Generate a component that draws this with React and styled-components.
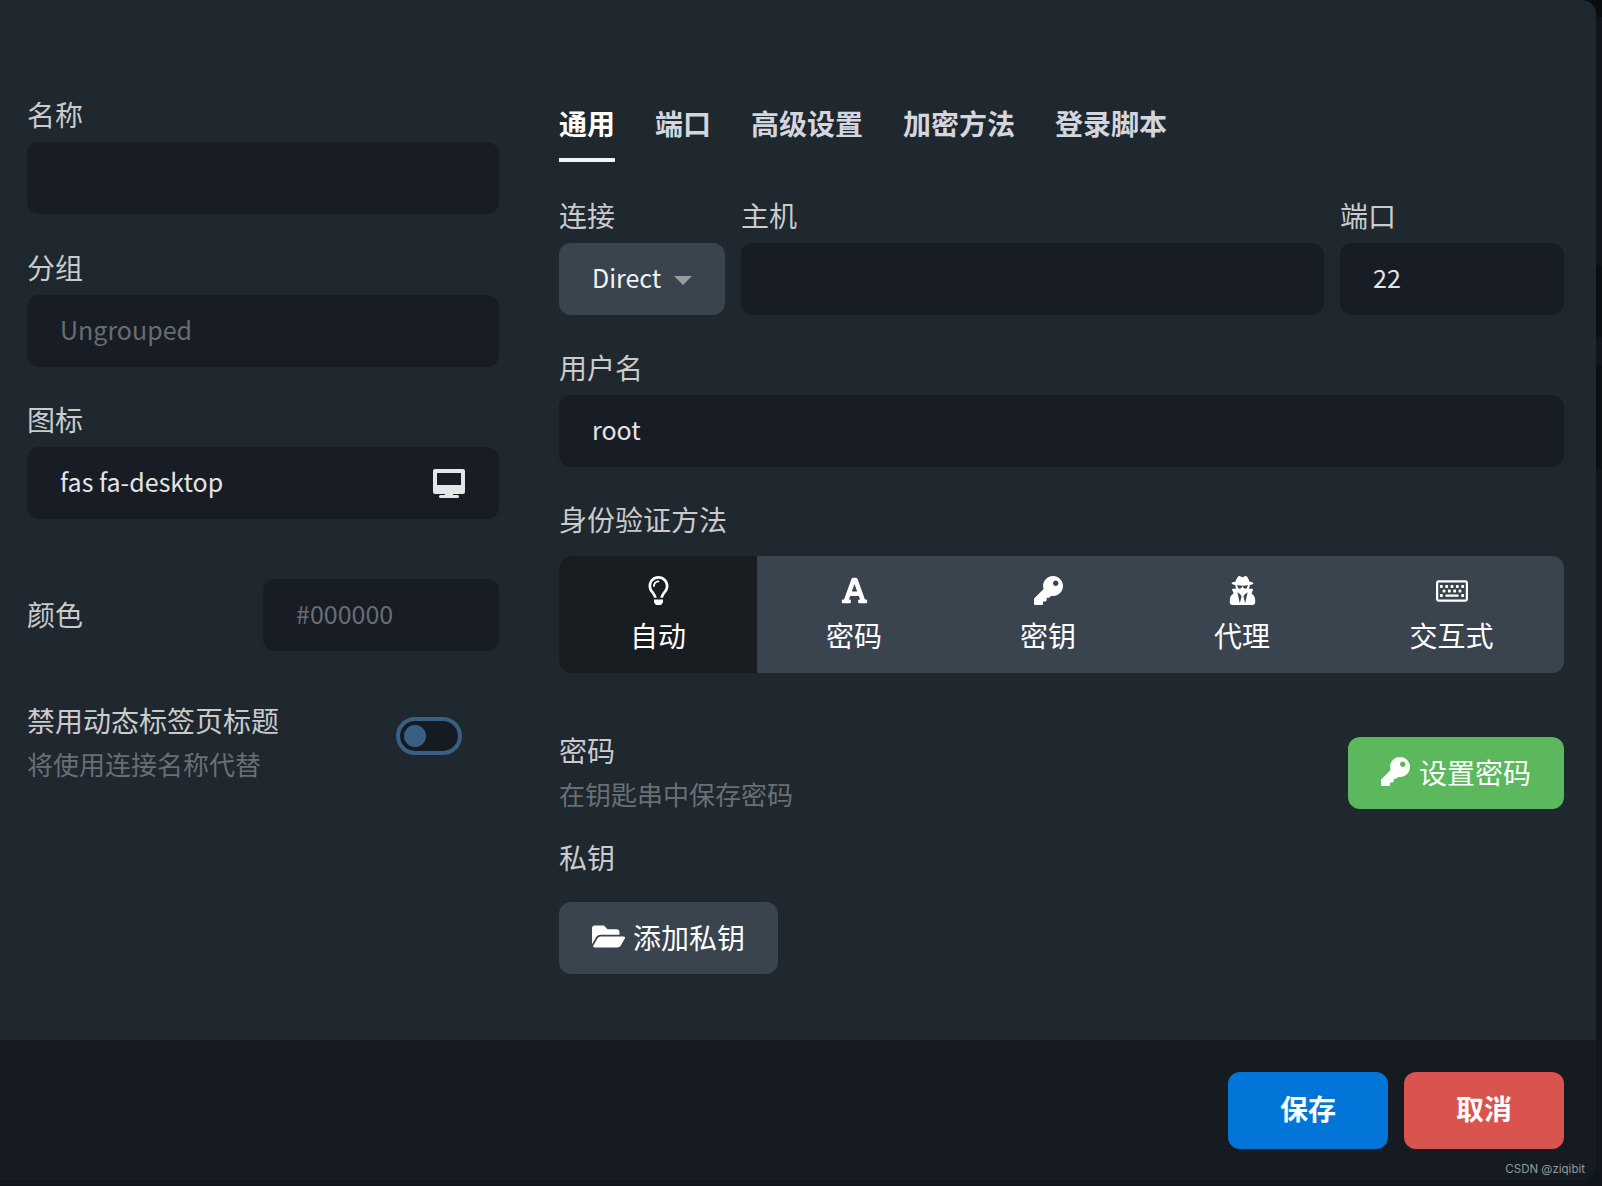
import React from 'react';
import styled, { createGlobalStyle } from 'styled-components';
import {
    FaFolderOpen,
    FaFont,
    FaKey,
    FaRegKeyboard,
    FaRegLightbulb,
    FaUserSecret,
} from 'react-icons/fa';

const GlobalStyle = createGlobalStyle`
    * {
        box-sizing: border-box;
    }
    html, body {
        margin: 0;
        padding: 0;
    }
    body {
        height: 1186px;
        overflow: hidden;
        font-family: "Noto Sans CJK SC", "Noto Sans", sans-serif;
        background: linear-gradient(
            to bottom,
            #0a0e10 0 17px,
            #10161c 17px 265px,
            #0a0f12 265px 337px,
            #10161c 337px 365px,
            #0c1114 365px 470px,
            #10161c 470px
        );
    }
`;

const Dialog = styled.div`
    position: relative;
    width: 1596px;
    height: 1180px;
    display: flex;
    flex-direction: column;
    background: #1f272f;
    border-radius: 0 14px 16px 0;
    overflow: hidden;
`;

const Body = styled.div`
    flex: 1;
    display: flex;
    gap: 60px;
    padding: 94px 32px 0 27px;
`;

const LeftColumn = styled.div`
    width: 472px;
    flex-shrink: 0;
`;

const RightColumn = styled.div`
    flex: 1;
    min-width: 0;
    margin-top: 6px;
`;

const Group = styled.div`
    margin-bottom: ${(p) => p.$gap ?? 33}px;
`;

const Label = styled.div`
    height: 40px;
    line-height: 41px;
    margin-bottom: ${(p) => p.$gap ?? 8}px;
    font-size: 28px;
    color: #c9cbcc;
    white-space: nowrap;
`;

const Field = styled.div`
    height: 72px;
    padding: 0 33px 4px;
    border-radius: 12px;
    background: #181d25;
    font-size: 25px;
    color: ${(p) => (p.$muted ? '#666d74' : '#e4e5e6')};
    display: flex;
    align-items: center;
    justify-content: space-between;
`;

const DesktopIcon = styled.svg`
    width: 32px;
    height: 29px;
    margin: 4px 1px 0 0;
    fill: #e4e5e6;
`;

const ColorRow = styled.div`
    display: flex;
    align-items: center;
    justify-content: space-between;
    margin-top: 60px;
`;

const ColorLabel = styled(Label)`
    line-height: 38px;
    margin-bottom: 0;
`;

const ColorField = styled(Field)`
    width: 236px;
`;

const ToggleRow = styled.div`
    display: flex;
    justify-content: space-between;
    align-items: flex-start;
    margin-top: 48px;
    padding-right: 37px;
`;

const ToggleTitle = styled.div`
    height: 44px;
    line-height: 42px;
    font-size: 28px;
    color: #c9cbcc;
`;

const Hint = styled.div`
    height: 44px;
    line-height: 42px;
    font-size: 26px;
    color: #6a6f74;
`;

const Toggle = styled.div`
    width: 66px;
    height: 38px;
    margin-top: 18px;
    padding-left: 4px;
    display: flex;
    align-items: center;
    border: 4px solid #3a5f85;
    border-radius: 19px;
    background: #141b22;
`;

const Knob = styled.span`
    width: 22px;
    height: 22px;
    border-radius: 50%;
    background: #3a5f85;
`;

const Tabs = styled.div`
    display: flex;
    gap: 40px;
    height: 62px;
    margin-bottom: 33px;
`;

const Tab = styled.div`
    height: 62px;
    line-height: 47px;
    font-size: 28px;
    font-weight: 700;
    color: ${(p) => (p.$active ? '#ffffff' : '#d3d6de')};
    border-bottom: 4px solid ${(p) => (p.$active ? '#f4f4f4' : 'transparent')};
`;

const ConnectionRow = styled.div`
    display: flex;
    gap: 16px;
    margin-bottom: 32px;
`;

const SelectCol = styled.div`
    width: 166px;
`;

const HostCol = styled.div`
    flex: 1;
`;

const PortCol = styled.div`
    width: 224px;
`;

const Select = styled.div`
    height: 72px;
    padding: 0 0 4px 33px;
    display: flex;
    align-items: center;
    gap: 13px;
    border-radius: 12px;
    background: #3a444f;
    font-size: 25px;
    color: #f2f3f4;
`;

const Caret = styled.span`
    width: 0;
    height: 0;
    margin-top: 6px;
    border-left: 9px solid transparent;
    border-right: 9px solid transparent;
    border-top: 9px solid #9a9ca0;
`;

const AuthGroup = styled.div`
    display: grid;
    grid-template-columns: 198px 194px 194px 194px 1fr;
    height: 117px;
    margin-bottom: 56px;
    border-radius: 12px;
    background: #3a444f;
    overflow: hidden;
`;

const AuthOption = styled.div`
    display: flex;
    flex-direction: column;
    align-items: center;
    padding-top: 20px;
    font-size: 28px;
    color: #ffffff;
    background: ${(p) => (p.$active ? '#181d22' : 'transparent')};
`;

const IconSlot = styled.div`
    height: 29px;
    display: flex;
    align-items: center;
`;

const AuthText = styled.div`
    height: 40px;
    line-height: 40px;
    margin-top: 10px;
`;

const PasswordRow = styled.div`
    display: flex;
    justify-content: space-between;
    align-items: center;
    margin-bottom: 20px;
`;

const PasswordTitle = styled.div`
    height: 44px;
    line-height: 42px;
    font-size: 28px;
    color: #c9cbcc;
`;

const ActionButton = styled.button`
    height: 72px;
    padding: 0 33px 3px;
    display: inline-flex;
    align-items: center;
    gap: ${(p) => p.$gap ?? 8}px;
    border: none;
    border-radius: 12px;
    background: ${(p) => p.$bg};
    color: #ffffff;
    font-family: inherit;
    font-size: 28px;
`;

const Footer = styled.div`
    height: 140px;
    padding: 32px 32px 0 0;
    display: flex;
    justify-content: flex-end;
    gap: 16px;
    background: #151b21;
`;

const FooterButton = styled.button`
    width: 160px;
    height: 77px;
    padding: 0 0 6px;
    border: none;
    border-radius: 12px;
    background: ${(p) => p.$bg};
    color: #ffffff;
    font-family: inherit;
    font-size: 28px;
    font-weight: 700;
`;

const Watermark = styled.div`
    position: absolute;
    right: 17px;
    bottom: 8px;
    font-family: Inter, "Liberation Sans", sans-serif;
    font-size: 11.5px;
    line-height: 18px;
    color: #95999c;
`;

const authOptions = [
    { icon: <FaRegLightbulb size={29} />, text: '自动', active: true },
    { icon: <FaFont size={29} />, text: '密码' },
    { icon: <FaKey size={29} />, text: '密钥' },
    { icon: <FaUserSecret size={29} />, text: '代理' },
    { icon: <FaRegKeyboard size={32} />, text: '交互式' },
];

const tabs = ['通用', '端口', '高级设置', '加密方法', '登录脚本'];

const App = () => {
    return (
        <>
            <GlobalStyle />
            <Dialog>
                <Body>
                    <LeftColumn>
                        <Group>
                            <Label>名称</Label>
                            <Field />
                        </Group>
                        <Group $gap={32}>
                            <Label>分组</Label>
                            <Field $muted>Ungrouped</Field>
                        </Group>
                        <Group $gap={0}>
                            <Label>图标</Label>
                            <Field>
                                fas fa-desktop
                                <DesktopIcon viewBox="0 0 32 29">
                                    <path
                                        fillRule="evenodd"
                                        d="M2 0h28a2 2 0 0 1 2 2v21a2 2 0 0 1-2 2H20v1h4.5a1.5 1.5 0 0 1 0 3h-17a1.5 1.5 0 0 1 0-3H12v-1H2a2 2 0 0 1-2-2V2a2 2 0 0 1 2-2zM4 4v12h24V4H4z"
                                    />
                                </DesktopIcon>
                            </Field>
                        </Group>
                        <ColorRow>
                            <ColorLabel>颜色</ColorLabel>
                            <ColorField $muted>#000000</ColorField>
                        </ColorRow>
                        <ToggleRow>
                            <div>
                                <ToggleTitle>禁用动态标签页标题</ToggleTitle>
                                <Hint>将使用连接名称代替</Hint>
                            </div>
                            <Toggle>
                                <Knob />
                            </Toggle>
                        </ToggleRow>
                    </LeftColumn>
                    <RightColumn>
                        <Tabs>
                            {tabs.map((tab, i) => (
                                <Tab key={tab} $active={i === 0}>{tab}</Tab>
                            ))}
                        </Tabs>
                        <ConnectionRow>
                            <SelectCol>
                                <Label>连接</Label>
                                <Select>
                                    Direct
                                    <Caret />
                                </Select>
                            </SelectCol>
                            <HostCol>
                                <Label>主机</Label>
                                <Field />
                            </HostCol>
                            <PortCol>
                                <Label>端口</Label>
                                <Field>22</Field>
                            </PortCol>
                        </ConnectionRow>
                        <Group $gap={32}>
                            <Label>用户名</Label>
                            <Field>root</Field>
                        </Group>
                        <Label $gap={17}>身份验证方法</Label>
                        <AuthGroup>
                            {authOptions.map((opt) => (
                                <AuthOption key={opt.text} $active={opt.active}>
                                    <IconSlot>{opt.icon}</IconSlot>
                                    <AuthText>{opt.text}</AuthText>
                                </AuthOption>
                            ))}
                        </AuthGroup>
                        <PasswordRow>
                            <div>
                                <PasswordTitle>密码</PasswordTitle>
                                <Hint>在钥匙串中保存密码</Hint>
                            </div>
                            <ActionButton $bg="#5cb85c" $gap={9}>
                                <FaKey size={29} />
                                设置密码
                            </ActionButton>
                        </PasswordRow>
                        <Label $gap={25}>私钥</Label>
                        <ActionButton $bg="#3a444f">
                            <FaFolderOpen size={33} />
                            添加私钥
                        </ActionButton>
                    </RightColumn>
                </Body>
                <Footer>
                    <FooterButton $bg="#0275d8">保存</FooterButton>
                    <FooterButton $bg="#d9534f">取消</FooterButton>
                </Footer>
            </Dialog>
            <Watermark>CSDN @ziqibit</Watermark>
        </>
    );
};

export default App;
